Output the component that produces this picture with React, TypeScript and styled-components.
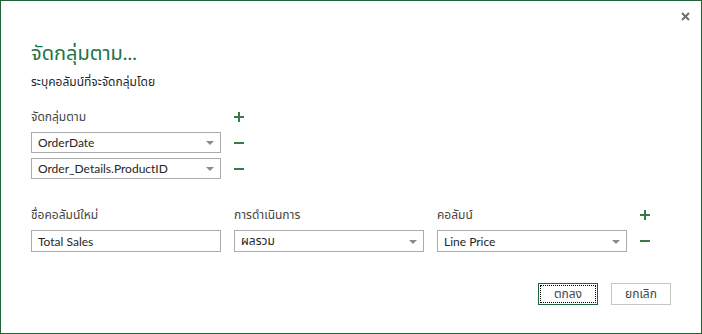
import styled, { createGlobalStyle } from "styled-components";

const GlobalStyle = createGlobalStyle`
  html, body {
    margin: 0;
    padding: 0;
    background: #ffffff;
  }
  body {
    font-family: "Segoe UI", Lato, "Leelawadee UI", "Noto Sans Thai", "Noto Sans", sans-serif;
  }
`;

const green = "#217346";
const iconGreen = "#3c7a45";

const Dialog = styled.div`
  position: relative;
  width: 702px;
  height: 334px;
  box-sizing: border-box;
  border: 1px solid #1d6538;
  background: #ffffff;
  padding: 37px 30px 0 30px;
  color: #333333;
  font-size: 12px;
`;

const CloseButton = styled.button`
  position: absolute;
  top: 9px;
  right: 10px;
  width: 12px;
  height: 12px;
  padding: 0;
  border: none;
  background: transparent;
  display: flex;
  align-items: center;
  justify-content: center;
`;

const Title = styled.h1`
  margin: 0;
  font-size: 20px;
  font-weight: 400;
  line-height: 28px;
  color: ${green};
`;

const Subtitle = styled.div`
  margin-top: 7px;
  line-height: 18px;
  font-size: 12px;
  color: #262626;
`;

const Label = styled.div`
  line-height: 18px;
  color: #444444;
`;

const GroupSection = styled.div`
  margin-top: 15px;
  display: grid;
  grid-template-columns: 190px 16px;
  grid-template-rows: 21px 21px 21px;
  column-gap: 13px;
  row-gap: 5px;
  align-items: center;
`;

const AggSection = styled.div`
  margin-top: 25px;
  display: grid;
  grid-template-columns: 190px 190px 190px 16px;
  grid-template-rows: 21px 22px;
  column-gap: 13px;
  row-gap: 5px;
  align-items: center;
`;

const IconCell = styled.div`
  display: flex;
  justify-content: flex-start;
  align-items: center;
  height: 100%;
`;

const Field = styled.div<{ $height?: number }>`
  box-sizing: border-box;
  width: 190px;
  height: ${(p) => p.$height ?? 21}px;
  border: 1px solid #ababab;
  display: flex;
  align-items: center;
  justify-content: space-between;
  padding: 0 6px 0 6px;
  color: #262626;
  font-size: 12px;
`;

const Arrow = styled.span`
  width: 0;
  height: 0;
  border-left: 4px solid transparent;
  border-right: 4px solid transparent;
  border-top: 4px solid #8a8a8a;
  margin-top: 1px;
`;

const Footer = styled.div`
  margin-top: 31px;
  display: flex;
  justify-content: flex-end;
  gap: 13px;
`;

const Button = styled.button<{ $primary?: boolean }>`
  box-sizing: border-box;
  width: 60px;
  height: 22px;
  background: #ffffff;
  font-family: inherit;
  font-size: 12px;
  color: #444444;
  border: 1px solid ${(p) => (p.$primary ? "#1d6538" : "#c6c6c6")};
  outline: ${(p) => (p.$primary ? "1px dotted #000000" : "none")};
  outline-offset: -3px;
  padding: 0;
`;

const Plus = () => (
  <svg width="10" height="10" viewBox="0 0 10 10">
    <rect x="4" y="0" width="2" height="10" fill={iconGreen} />
    <rect x="0" y="4" width="10" height="2" fill={iconGreen} />
  </svg>
);

const Minus = () => (
  <svg width="10" height="10" viewBox="0 0 10 10">
    <rect x="0" y="4" width="10" height="2" fill={iconGreen} />
  </svg>
);

const CloseIcon = () => (
  <svg width="9" height="9" viewBox="0 0 9 9">
    <path d="M1 1 L8 8 M8 1 L1 8" stroke="#6f6f6f" strokeWidth="2" />
  </svg>
);

const Select = ({ value, height }: { value: string; height?: number }) => (
  <Field $height={height}>
    <span>{value}</span>
    <Arrow />
  </Field>
);

export default function App() {
  return (
    <>
      <GlobalStyle />
      <Dialog>
        <CloseButton aria-label="close">
          <CloseIcon />
        </CloseButton>
        <Title>จัดกลุ่มตาม...</Title>
        <Subtitle>ระบุคอลัมน์ที่จะจัดกลุ่มโดย</Subtitle>

        <GroupSection>
          <Label>จัดกลุ่มตาม</Label>
          <IconCell>
            <Plus />
          </IconCell>
          <Select value="OrderDate" />
          <IconCell>
            <Minus />
          </IconCell>
          <Select value="Order_Details.ProductID" />
          <IconCell>
            <Minus />
          </IconCell>
        </GroupSection>

        <AggSection>
          <Label>ชื่อคอลัมน์ใหม่</Label>
          <Label>การดำเนินการ</Label>
          <Label>คอลัมน์</Label>
          <IconCell>
            <Plus />
          </IconCell>
          <Field $height={22}>
            <span>Total Sales</span>
          </Field>
          <Select value="ผลรวม" height={22} />
          <Select value="Line Price" height={22} />
          <IconCell>
            <Minus />
          </IconCell>
        </AggSection>

        <Footer>
          <Button $primary>ตกลง</Button>
          <Button>ยกเลิก</Button>
        </Footer>
      </Dialog>
    </>
  );
}
